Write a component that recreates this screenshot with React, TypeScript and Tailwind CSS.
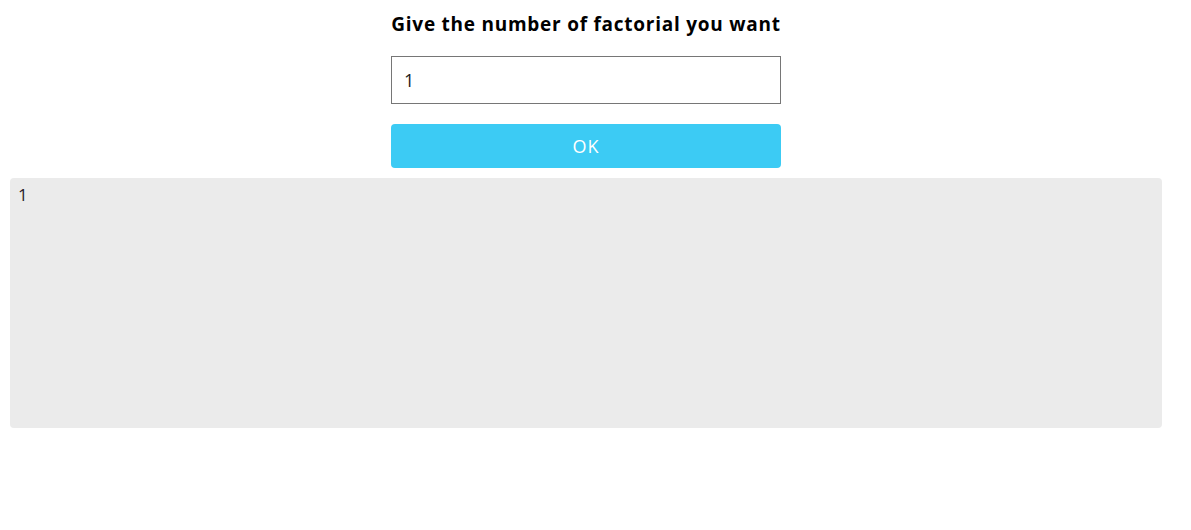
export default function App() {
  return (
    <div className="w-[1172px] bg-white" style={{ fontFamily: '"Open Sans", "Liberation Sans", sans-serif' }}>
      <div className="mx-auto w-[390px] pt-[11px]">
        <h1 className="whitespace-nowrap text-center text-[19px] font-bold leading-[26px] text-black tracking-[0.75px]">
          Give the number of factorial you want
        </h1>
        <input
          type="text"
          defaultValue="1"
          className="mt-[19px] box-border block h-[48px] w-[390px] border border-[#767676] px-[12px] text-[18px] text-[#222] outline-none"
        />
        <button className="mt-[20px] block h-[44px] w-[390px] rounded-[4px] bg-[#3ccbf4] text-[18px] tracking-[1px] text-white">
          OK
        </button>
      </div>
      <div className="mx-[10px] mt-[10px] h-[250px] rounded-[4px] bg-[#ebebeb] px-[8px] pt-[4px] text-[17px] text-[#2a1a2a]">
        1
      </div>
    </div>
  );
}
